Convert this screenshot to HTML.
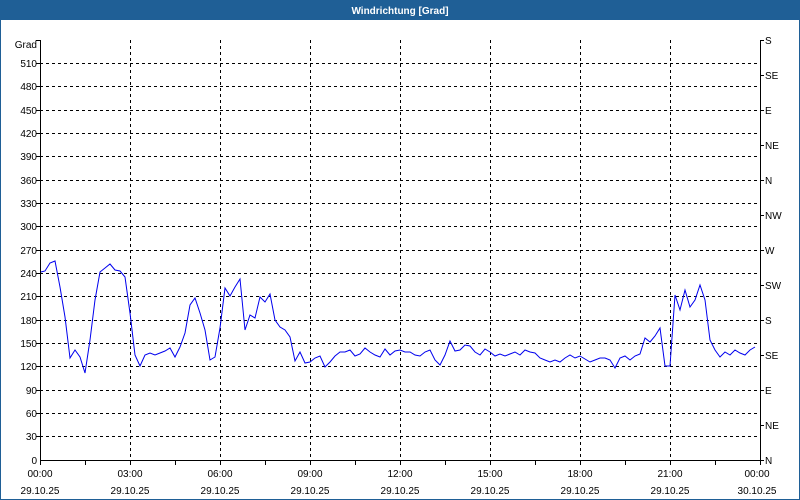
<!DOCTYPE html>
<html><head><meta charset="utf-8"><style>
html,body{margin:0;padding:0;width:800px;height:500px;overflow:hidden;background:#fff}
</style></head><body>
<svg width="800" height="500" xmlns="http://www.w3.org/2000/svg" font-family="Liberation Sans, sans-serif" font-size="10">
<rect x="0" y="0" width="800" height="500" fill="#fff"/>
<rect x="0.5" y="0.5" width="799" height="499" fill="none" stroke="#1f5f96"/>
<rect x="0" y="0" width="800" height="20" fill="#1f5f96"/>
<text x="400" y="14" fill="#fff" font-weight="bold" text-anchor="middle">Windrichtung [Grad]</text>
<g stroke="#000" stroke-dasharray="3,3" stroke-width="1">
<path d="M40 63.5H760M40 86.5H760M40 110.5H760M40 133.5H760M40 156.5H760M40 180.5H760M40 203.5H760M40 226.5H760M40 250.5H760M40 273.5H760M40 296.5H760M40 320.5H760M40 343.5H760M40 366.5H760M40 390.5H760M40 413.5H760M40 436.5H760"/>
<path d="M130.5 40V460M220.5 40V460M310.5 40V460M400.5 40V460M490.5 40V460M580.5 40V460M670.5 40V460"/>
</g>
<g stroke="#000" stroke-width="1" fill="none">
<path d="M40.5 40V460.5H760.5V40"/>
<path d="M40.5 40.5H36M40 63.5H36M40 86.5H36M40 110.5H36M40 133.5H36M40 156.5H36M40 180.5H36M40 203.5H36M40 226.5H36M40 250.5H36M40 273.5H36M40 296.5H36M40 320.5H36M40 343.5H36M40 366.5H36M40 390.5H36M40 413.5H36M40 436.5H36"/>
<path d="M760 40.5H764M760 75.5H764M760 110.5H764M760 145.5H764M760 180.5H764M760 215.5H764M760 250.5H764M760 285.5H764M760 320.5H764M760 355.5H764M760 390.5H764M760 425.5H764M760 460.5H764"/>
<path d="M40.5 460V465M85.5 460V465M130.5 460V465M175.5 460V465M220.5 460V465M265.5 460V465M310.5 460V465M355.5 460V465M400.5 460V465M445.5 460V465M490.5 460V465M535.5 460V465M580.5 460V465M625.5 460V465M670.5 460V465M715.5 460V465M760.5 460V465"/>
</g>
<g fill="#000" text-anchor="end">
<text x="37" y="48">Grad</text>
<text x="37" y="67">510</text><text x="37" y="90">480</text><text x="37" y="114">450</text><text x="37" y="137">420</text><text x="37" y="160">390</text><text x="37" y="184">360</text><text x="37" y="207">330</text><text x="37" y="230">300</text><text x="37" y="254">270</text><text x="37" y="277">240</text><text x="37" y="300">210</text><text x="37" y="324">180</text><text x="37" y="347">150</text><text x="37" y="370">120</text><text x="37" y="394">90</text><text x="37" y="417">60</text><text x="37" y="440">30</text><text x="37" y="464">0</text>
</g>
<g fill="#000">
<text x="765" y="44">S</text><text x="765" y="79">SE</text><text x="765" y="114">E</text><text x="765" y="149">NE</text><text x="765" y="184">N</text><text x="765" y="219">NW</text><text x="765" y="254">W</text><text x="765" y="289">SW</text><text x="765" y="324">S</text><text x="765" y="359">SE</text><text x="765" y="394">E</text><text x="765" y="429">NE</text><text x="765" y="464">N</text>
</g>
<g fill="#000" text-anchor="middle">
<text x="40" y="477">00:00</text><text x="40" y="494">29.10.25</text>
<text x="130" y="477">03:00</text><text x="130" y="494">29.10.25</text>
<text x="220" y="477">06:00</text><text x="220" y="494">29.10.25</text>
<text x="310" y="477">09:00</text><text x="310" y="494">29.10.25</text>
<text x="400" y="477">12:00</text><text x="400" y="494">29.10.25</text>
<text x="490" y="477">15:00</text><text x="490" y="494">29.10.25</text>
<text x="580" y="477">18:00</text><text x="580" y="494">29.10.25</text>
<text x="670" y="477">21:00</text><text x="670" y="494">29.10.25</text>
<text x="757" y="477">00:00</text><text x="757" y="494">30.10.25</text>
</g>
<polyline fill="none" stroke="#0000ee" stroke-width="1" points="41,272 45,271 50,263 55,261 60,287 65,317 70,358 75,350 80,357 85,373 90,340 95,300 100,272 105,268 110,264 115,270 120,271 125,277 130,313 135,355 140,366 145,355 150,353 155,355 160,353 165,351 170,348 175,357 180,347 185,333 190,305 195,298 200,313 205,330 210,360 215,357 220,328 225,288 230,296 235,287 240,279 245,330 250,315 255,318 260,297 265,302 270,294 275,320 280,327 285,330 290,337 295,361 300,352 305,363 310,362 315,358 320,356 325,367 330,362 335,356 340,352 345,352 350,350 355,356 360,354 365,348 370,352 375,355 380,357 385,349 390,355 395,351 400,350 405,352 410,352 415,355 420,356 425,352 430,350 435,360 440,365 445,355 450,341 455,351 460,350 465,345 470,346 475,352 480,355 485,349 490,352 495,356 500,354 505,356 510,354 515,352 520,355 525,350 530,352 535,353 540,358 545,360 550,362 555,360 560,362 565,358 570,355 575,358 580,356 585,359 590,362 595,360 600,358 605,358 610,360 615,368 620,358 625,356 630,360 635,356 640,354 645,338 650,342 655,336 660,328 665,366 670,366 675,295 680,310 685,290 690,307 695,300 700,285 705,300 710,340 715,350 720,357 725,352 730,355 735,350 740,353 745,355 750,350 755,347"/>
</svg>
</body></html>
